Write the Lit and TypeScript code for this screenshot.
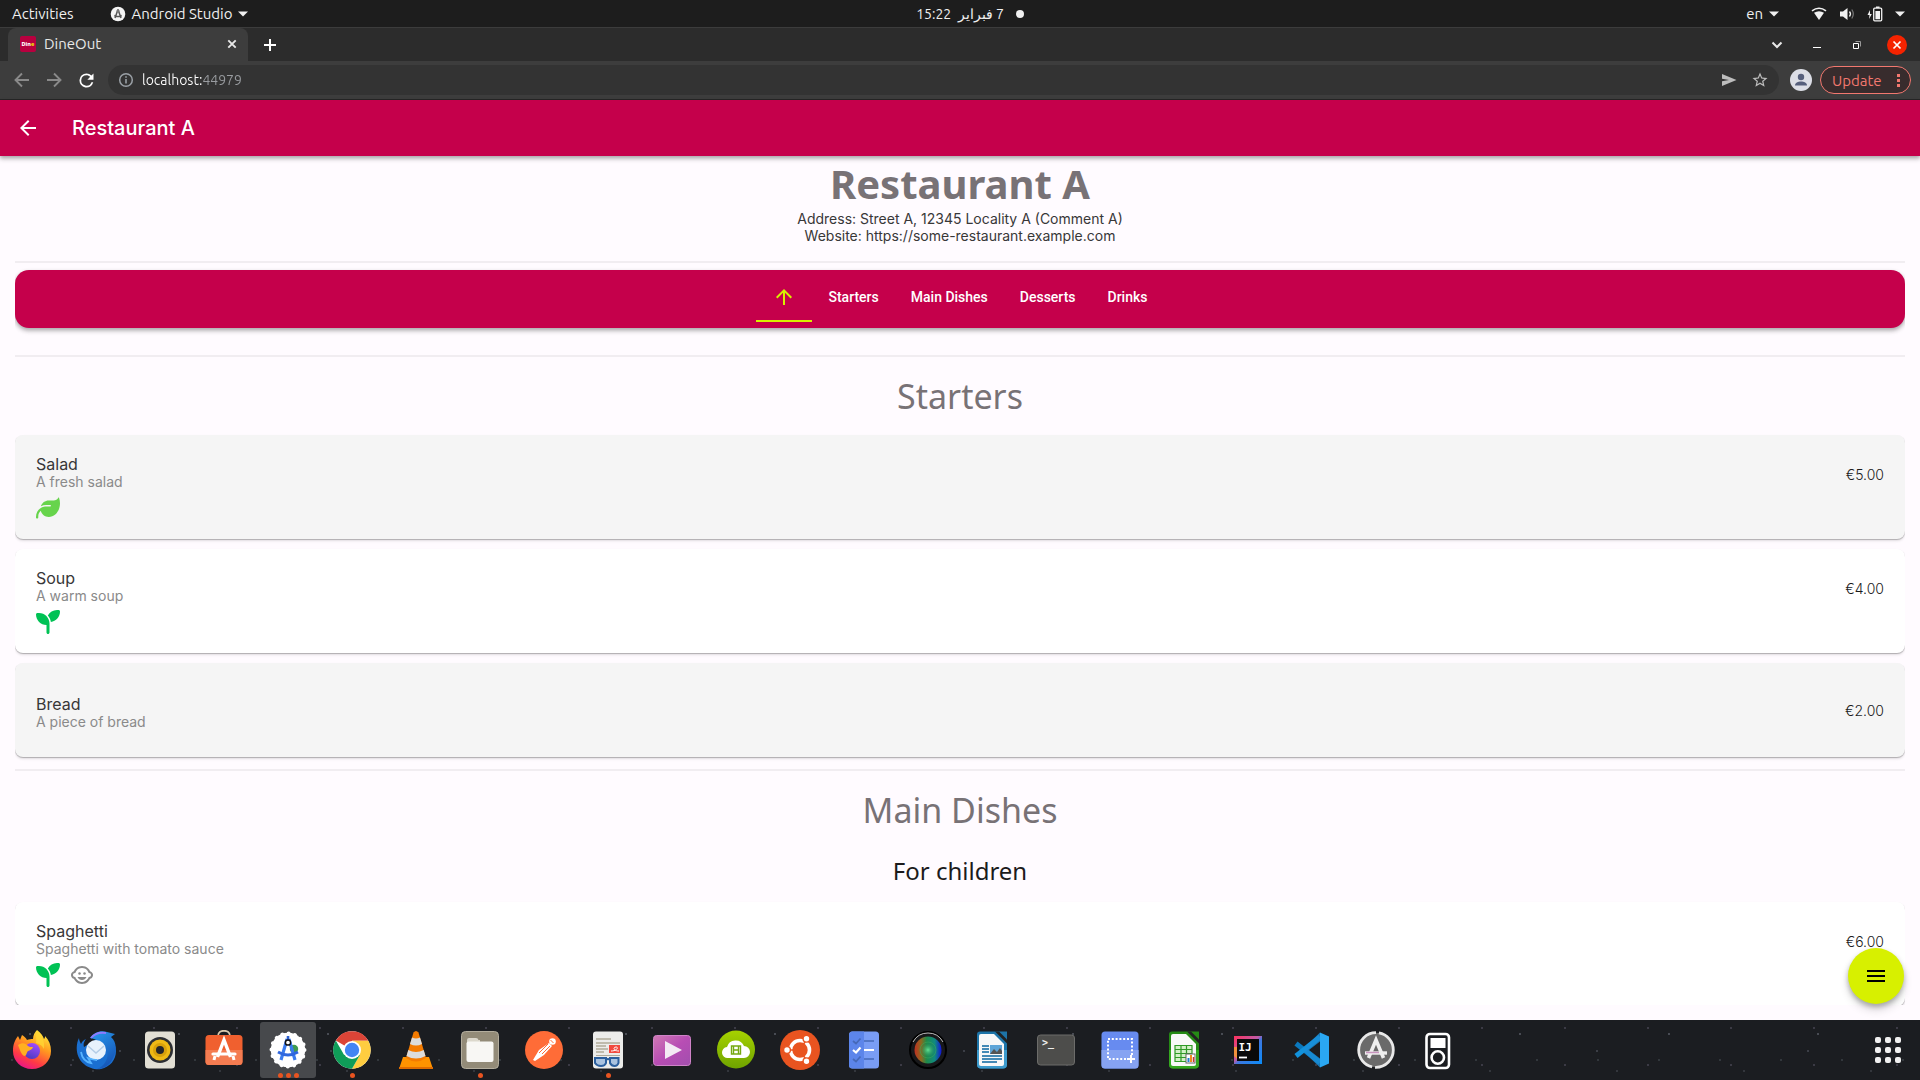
import { LitElement, html, svg, css, nothing, TemplateResult, SVGTemplateResult } from "lit";
import { customElement, property, state } from "lit/decorators.js";
import { classMap } from "lit/directives/class-map.js";

const icon = (body: SVGTemplateResult, size = 24, box = "0 0 24 24") =>
  html`<svg width=${size} height=${size} viewBox=${box} aria-hidden="true">${body}</svg>`;

const caret = () => icon(svg`<path fill="currentColor" d="M0 0h10L5 5z"/>`, 10, "0 0 10 5");

/* ---------- Desktop top panel ---------- */

@customElement("system-bar")
export class SystemBar extends LitElement {
  static styles = css`
    :host {
      display: grid;
      grid-template-columns: 1fr auto 1fr;
      align-items: center;
      height: 27px;
      background: #1d1d1d;
      color: #f0f0f0;
      font: 15px "Ubuntu", "Noto Sans", sans-serif;
    }
    button {
      display: flex;
      align-items: center;
      height: 27px;
      padding: 0;
      border: 0;
      background: none;
      color: inherit;
      font: inherit;
    }
    .side {
      display: flex;
      align-items: center;
      padding: 0 12px;
    }
    .left {
      gap: 36px;
    }
    .right {
      justify-content: flex-end;
      gap: 32px;
      padding-right: 15px;
    }
    .item {
      gap: 6px;
    }
    .clock {
      gap: 12px;
      padding-left: 20px;
      font-size: 14px;
    }
    .dot {
      width: 8px;
      height: 8px;
      border-radius: 50%;
      background: #f0f0f0;
    }
    .status {
      gap: 12px;
    }
  `;

  render() {
    return html`
      <div class="side left">
        <button>Activities</button>
        <button class="item">
          ${icon(svg`<circle cx="8" cy="8" r="7.300" fill="#f4f4f4"/><path d="M8 3.600 5 12M8 3.600 11 12M4.300 9.500q3.700 2 7.400 0" fill="none" stroke="#555" stroke-width="1.500"/><circle cx="8" cy="5" r="1.500" fill="#777"/>`, 16, "0 0 16 16")}
          Android Studio ${caret()}
        </button>
      </div>
      <button class="clock">
        <span dir="rtl">7 فبراير &nbsp;15:22</span>
        <span class="dot"></span>
      </button>
      <div class="side right">
        <button class="item">en ${caret()}</button>
        <button class="status" aria-label="System menu">
          ${icon(svg`<path fill="#f2f2f2" d="M8 14 3 6.800Q8 3.500 13 6.800z"/><path d="M1 4.800Q8-.4 15 4.800" fill="none" stroke="#f2f2f2" stroke-width="1.600"/>`, 16, "0 0 16 16")}
          ${icon(svg`<path fill="#f2f2f2" d="M1 5.500h3L8.500 2v12L4 10.500H1z"/><path d="M10.500 5.500q2 2.500 0 5" fill="none" stroke="#f2f2f2" stroke-width="1.300"/><path d="M12.800 3.500q3 4.500 0 9" fill="none" stroke="#777" stroke-width="1.200"/>`, 16, "0 0 16 16")}
          ${icon(svg`<path fill="#f2f2f2" d="M3 4 .5 9h2L2 13l2.800-5H3z"/><rect x="6.700" y="2.200" width="8" height="12.600" rx="1" fill="none" stroke="#f2f2f2" stroke-width="1.300"/><path fill="#f2f2f2" d="M9 .6h3.500v1.500H9zM8.400 5h4.600v8.300H8.400z"/>`, 16, "0 0 16 16")}
          ${caret()}
        </button>
      </div>
    `;
  }
}

/* ---------- Browser window frame ---------- */

@customElement("browser-frame")
export class BrowserFrame extends LitElement {
  static styles = css`
    :host {
      display: block;
      background: #2c2c2c;
      color: #e8e8e8;
      font: 15px "Ubuntu", "Noto Sans", sans-serif;
      border-bottom: 1px solid #262626;
    }
    button {
      display: grid;
      place-items: center;
      padding: 0;
      border: 0;
      background: none;
      color: inherit;
      font: inherit;
    }
    .strip {
      display: flex;
      align-items: center;
      height: 34px;
      padding: 0 13px 0 8px;
      box-sizing: border-box;
      border-top: 1px solid #3c3c3c;
    }
    .tab {
      display: flex;
      align-items: center;
      align-self: stretch;
      gap: 8px;
      width: 240px;
      padding: 0 8px 2px 12px;
      box-sizing: border-box;
      border-radius: 8px 8px 0 0;
      background: #3d3d3d;
    }
    .tab-title {
      flex: 1;
    }
    .small {
      width: 16px;
      height: 16px;
    }
    .new-tab {
      margin-left: 12px;
      width: 20px;
      height: 20px;
    }
    .window-buttons {
      display: flex;
      align-items: center;
      gap: 20px;
      margin-left: auto;
    }
    .window-buttons button {
      width: 20px;
      height: 20px;
    }
    .close {
      border-radius: 50%;
      background: #f52300;
      color: #fff;
    }
    .toolbar {
      display: flex;
      align-items: center;
      height: 38px;
      padding: 0 9px 0 12px;
      box-sizing: border-box;
      background: #3d3d3d;
    }
    .nav {
      display: flex;
      gap: 12px;
      color: #8a8a8a;
    }
    .reload {
      color: #fff;
    }
    .address {
      display: flex;
      flex: 1;
      align-items: center;
      gap: 6px;
      height: 30px;
      margin: 0 11px;
      padding: 0 10px 0 8px;
      box-sizing: border-box;
      border-radius: 15px;
      background: #333;
      color: #bdbdbd;
    }
    .address input {
      flex: 1;
      min-width: 0;
      padding: 0;
      border: 0;
      outline: 0;
      font: inherit;
      font-size: 14px;
      color: transparent;
      background: linear-gradient(90deg, #fff 61px, #999ca0 61px);
      -webkit-background-clip: text;
      background-clip: text;
    }
    .tools {
      display: flex;
      gap: 12px;
    }
    .update {
      display: flex;
      align-items: center;
      justify-content: space-between;
      width: 91px;
      height: 28px;
      margin-left: 8px;
      padding: 0 5px 0 11px;
      box-sizing: border-box;
      border: 1px solid #f2786f;
      border-radius: 14px;
      background: #382c2d;
      color: #f2786f;
    }
  `;

  render() {
    return html`
      <div class="strip">
        <div class="tab">
          ${icon(svg`<rect width="16" height="16" rx="2" fill="#b8003f"/><text x="1.500" y="10" font-family="Noto Sans" font-weight="800" font-size="5.500" fill="#fff">Din<tspan fill="#f0e000">e</tspan></text>`, 16, "0 0 16 16")}
          <span class="tab-title">DineOut</span>
          <button class="small" aria-label="Close tab">
            ${icon(svg`<path d="m4.300 4.300 7.400 7.400m0-7.400-7.400 7.400" stroke="currentColor" stroke-width="1.900"/>`, 16, "0 0 16 16")}
          </button>
        </div>
        <button class="new-tab" aria-label="New tab">
          ${icon(svg`<path d="M10 4v12M4 10h12" stroke="#fff" stroke-width="2"/>`, 20, "0 0 20 20")}
        </button>
        <div class="window-buttons">
          <button aria-label="Search tabs">
            ${icon(svg`<path d="m5.500 7.500 4.500 4.500 4.500-4.500" fill="none" stroke="currentColor" stroke-width="2"/>`, 20, "0 0 20 20")}
          </button>
          <button aria-label="Minimise">
            ${icon(svg`<path d="M6 12.500h8" stroke="#fff" stroke-width="1"/>`, 20, "0 0 20 20")}
          </button>
          <button aria-label="Restore">
            ${icon(svg`<path d="M8.500 6.500h5v5" fill="none" stroke="#999"/><path d="M6.500 8.500h5v5h-5z" fill="none" stroke="#fff"/>`, 20, "0 0 20 20")}
          </button>
          <button class="close" aria-label="Close window">
            ${icon(svg`<path d="m6.500 6.500 7 7m0-7-7 7" stroke="currentColor" stroke-width="1.700"/>`, 20, "0 0 20 20")}
          </button>
        </div>
      </div>
      <div class="toolbar">
        <div class="nav">
          <button aria-label="Back">
            ${icon(svg`<path d="M17 10H4m6-6.500L3.500 10l6.500 6.500" fill="none" stroke="currentColor" stroke-width="1.900"/>`, 20, "0 0 20 20")}
          </button>
          <button aria-label="Forward">
            ${icon(svg`<path d="M3 10h13m-6-6.500 6.500 6.500-6.500 6.500" fill="none" stroke="currentColor" stroke-width="1.900"/>`, 20, "0 0 20 20")}
          </button>
          <button class="reload" aria-label="Reload">
            ${icon(svg`<path fill="currentColor" d="M17.650 6.350A7.960 7.960 0 0 0 12 4a8 8 0 1 0 7.730 10h-2.080A6 6 0 1 1 12 6c1.660 0 3.140.69 4.220 1.780L13 11h7V4z"/>`, 21)}
          </button>
        </div>
        <div class="address">
          ${icon(svg`<circle cx="10" cy="10" r="6.300" fill="none" stroke="#9aa0a6" stroke-width="1.500"/><path d="M10 9v4.500M10 6.300v1.500" stroke="#9aa0a6" stroke-width="1.600"/>`, 20, "0 0 20 20")}
          <input type="text" aria-label="Address" .value=${"localhost:44979"} spellcheck="false" />
          <div class="tools">
            <button aria-label="Share this page">
              ${icon(svg`<path fill="currentColor" d="M3 4 17.500 10 3 16v-4.700L10 10 3 8.700z"/>`, 20, "0 0 20 20")}
            </button>
            <button aria-label="Bookmark this page">
              ${icon(svg`<path fill="currentColor" d="m22 9.240-7.190-.62L12 2 9.190 8.630 2 9.240l5.460 4.730L5.820 21 12 17.270 18.180 21l-1.630-7.030zM12 15.400l-3.760 2.270 1-4.280-3.320-2.880 4.380-.38L12 6.100l1.710 4.040 4.380.38-3.320 2.880 1 4.280z"/>`, 18)}
            </button>
          </div>
        </div>
        <button aria-label="Profile">
          ${icon(svg`<circle cx="11" cy="11" r="11" fill="#dcdee6"/><circle cx="11" cy="8" r="3.200" fill="#565f7c"/><path d="M5 16.500c0-2.600 3-4 6-4s6 1.400 6 4z" fill="#565f7c"/>`, 22, "0 0 22 22")}
        </button>
        <button class="update">
          Update
          ${icon(svg`<path fill="currentColor" d="M0 0h3v3H0zM0 5h3v3H0zM0 10h3v3H0z"/>`, 13, "-5 0 13 13")}
        </button>
      </div>
    `;
  }
}

/* ---------- Restaurant page ---------- */

type Tag = "vegetarian" | "vegan" | "child";

interface Dish {
  name: string;
  note: string;
  price: string;
  tags: Tag[];
  shaded?: boolean;
}

interface Section {
  title: string;
  subtitle?: string;
  dishes: Dish[];
}

const MENU: Section[] = [
  {
    title: "Starters",
    dishes: [
      { name: "Salad", note: "A fresh salad", price: "€5.00", tags: ["vegetarian"], shaded: true },
      { name: "Soup", note: "A warm soup", price: "€4.00", tags: ["vegan"] },
      { name: "Bread", note: "A piece of bread", price: "€2.00", tags: [], shaded: true },
    ],
  },
  {
    title: "Main Dishes",
    subtitle: "For children",
    dishes: [
      { name: "Spaghetti", note: "Spaghetti with tomato sauce", price: "€6.00", tags: ["vegan", "child"] },
    ],
  },
];

const TAGS: Record<Tag, () => TemplateResult> = {
  vegetarian: () => icon(svg`<path fill="#67d44c" d="M272 96c-78.600 0-145.100 51.500-167.700 122.500 33.600-17 71.500-26.500 111.700-26.500h88c8.800 0 16 7.200 16 16s-7.200 16-16 16h-88c-16.600 0-32.700 1.900-48.300 5.400-25.900 5.900-49.900 16.400-71.400 30.700C38.300 298.800 0 364.900 0 440v16c0 13.300 10.700 24 24 24s24-10.700 24-24v-16c0-48.700 20.700-92.500 53.800-123.200C121.600 392.300 190.300 448 272 448h1c132.100-.7 239-130.900 239-291.400 0-42.600-7.500-83.100-21.100-119.600-2.600-6.900-12.700-6.600-16.200-.1C455.900 72.100 418.700 96 376 96z"/>`, 24, "0 0 512 512"),
  vegan: () => icon(svg`<path fill="#00c255" d="M512 32c0 113.600-84.600 207.500-194.200 222-7.100-53.400-30.600-101.600-65.300-139.300C290.800 46.300 364 0 448 0h32c17.700 0 32 14.300 32 32zM0 96c0-17.700 14.300-32 32-32h32c123.700 0 224 100.300 224 224v192c0 17.700-14.300 32-32 32s-32-14.300-32-32V320C100.300 320 0 219.700 0 96z"/>`, 24, "0 0 512 512"),
  child: () => icon(svg`<g fill="#8a8a8a"><circle cx="14.500" cy="10.500" r="1.250"/><circle cx="9.500" cy="10.500" r="1.250"/><path d="M22.940 12.660c.04-.21.06-.43.06-.66s-.02-.45-.06-.66c-.25-1.510-1.360-2.740-2.810-3.170-.53-1.120-1.280-2.100-2.190-2.910C16.360 3.850 14.280 3 12 3s-4.360.85-5.940 2.260c-.92.81-1.670 1.800-2.190 2.910-1.450.43-2.560 1.650-2.810 3.170-.04.21-.06.43-.06.66s.02.45.06.66c.25 1.510 1.360 2.740 2.810 3.170.52 1.110 1.270 2.090 2.170 2.890C7.620 20.140 9.710 21 12 21s4.380-.86 5.970-2.280c.9-.8 1.650-1.790 2.170-2.890 1.440-.43 2.550-1.650 2.800-3.170zM19 14c-.1 0-.19-.02-.29-.03-.2.67-.49 1.290-.86 1.860C16.600 17.740 14.450 19 12 19s-4.600-1.260-5.850-3.170c-.37-.57-.66-1.190-.86-1.860-.1.01-.19.03-.29.03-1.100 0-2-.9-2-2s.9-2 2-2c.1 0 .19.02.29.03.2-.67.49-1.290.86-1.860C7.400 6.260 9.550 5 12 5s4.600 1.260 5.850 3.170c.37.57.66 1.190.86 1.860.1-.01.19-.03.29-.03 1.100 0 2 .9 2 2s-.9 2-2 2zM7.500 14c.76 1.770 2.490 3 4.500 3s3.740-1.230 4.500-3z"/></g>`),
};

@customElement("dish-card")
export class DishCard extends LitElement {
  @property({ attribute: false }) dish!: Dish;

  static styles = css`
    :host {
      display: block;
    }
    .card {
      display: flex;
      align-items: flex-start;
      justify-content: space-between;
      padding: 20px 21px 19px;
      border-radius: 8px;
      background: #fff;
      box-shadow: 0 1px 1px rgba(0, 0, 0, 0.24), 0 2px 3px rgba(0, 0, 0, 0.1);
      line-height: 18px;
    }
    .shaded {
      background: #f5f5f5;
    }
    .plain {
      padding: 32px 21px 26px;
    }
    .name {
      margin: 0;
      font-size: 16px;
      font-weight: 400;
      color: #383738;
    }
    .note {
      margin: 0;
      font-size: 14px;
      font-weight: 400;
      color: #8a8a8a;
    }
    .tags {
      display: flex;
      gap: 10px;
      margin-top: 5px;
    }
    .price {
      margin-top: 11px;
      font-size: 14px;
      font-weight: 300;
      color: #1c1b1c;
    }
    .plain .price {
      margin-top: 7px;
    }
  `;

  render() {
    const { name, note, price, tags, shaded } = this.dish;
    return html`
      <article class=${classMap({ card: true, shaded: !!shaded, plain: !tags.length })}>
        <div>
          <h4 class="name">${name}</h4>
          <p class="note">${note}</p>
          ${tags.length ? html`<div class="tags">${tags.map((t) => TAGS[t]())}</div>` : nothing}
        </div>
        <span class="price">${price}</span>
      </article>
    `;
  }
}

@customElement("restaurant-page")
export class RestaurantPage extends LitElement {
  @state() private active = 0;

  static styles = css`
    :host {
      position: relative;
      display: flex;
      flex-direction: column;
      min-height: 0;
      background: #fffbff;
      font-family: "Inter", "Roboto", sans-serif;
      color: #1c1b1c;
    }
    button {
      padding: 0;
      border: 0;
      background: none;
      color: inherit;
      font: inherit;
    }
    .appbar {
      display: flex;
      align-items: center;
      gap: 32px;
      height: 56px;
      flex: none;
      padding: 0 16px;
      background: #c5004b;
      color: #fff;
      box-shadow: 0 2px 4px rgba(0, 0, 0, 0.3), 0 4px 5px rgba(0, 0, 0, 0.08);
      z-index: 1;
    }
    .back {
      display: grid;
      width: 24px;
      height: 24px;
    }
    .appbar h1 {
      margin: 0;
      font-size: 20px;
      font-weight: 500;
    }
    .scroll {
      flex: 1;
      min-height: 0;
      margin: 0 15px 15px;
      overflow: hidden;
    }
    .intro {
      height: 105px;
      text-align: center;
    }
    .intro h2 {
      margin: 0;
      padding-top: 2px;
      font: 700 40px/52px "Noto Sans", sans-serif;
      color: #787276;
    }
    .intro p {
      margin: 0;
      font-size: 14px;
      font-weight: 400;
      line-height: 17px;
      color: #383738;
    }
    hr {
      height: 2px;
      margin: 0;
      border: 0;
      background: #f1edf1;
    }
    .tabs {
      display: flex;
      justify-content: center;
      margin: 7px 0 27px;
      padding: 2px 0 6px;
      border-radius: 14px;
      background: #c5004b;
      color: #fff;
      box-shadow: 0 2px 4px rgba(0, 0, 0, 0.3), 0 4px 5px rgba(0, 0, 0, 0.08);
      font: 500 14px "Roboto", sans-serif;
    }
    .tab {
      display: flex;
      align-items: center;
      height: 50px;
      padding: 2px 16px 0;
      box-sizing: border-box;
      border-bottom: 2px solid transparent;
    }
    .tab.active {
      color: #d7f000;
      border-color: #d7f000;
    }
    .section h3 {
      margin: 0;
      padding: 4px 0;
      text-align: center;
      font: 400 34px/70px "Noto Sans", sans-serif;
      color: #787276;
    }
    .section .subtitle {
      margin: 0;
      padding-bottom: 9px;
      text-align: center;
      font: 400 24px/44px "Noto Sans", sans-serif;
    }
    .dishes {
      display: grid;
      gap: 10px;
      margin: 0;
      padding: 0 0 12px;
      list-style: none;
    }
    .fab {
      position: absolute;
      right: 16px;
      bottom: 16px;
      display: grid;
      place-items: center;
      width: 56px;
      height: 56px;
      border-radius: 50%;
      background: #d7f000;
      color: #000;
      box-shadow: 0 3px 5px rgba(0, 0, 0, 0.26), 0 6px 10px rgba(0, 0, 0, 0.14);
    }
  `;

  render() {
    const tabs = [
      icon(svg`<path fill="currentColor" d="m4 12 1.410 1.410L11 7.830V20h2V7.830l5.580 5.590L20 12l-8-8z"/>`),
      "Starters",
      "Main Dishes",
      "Desserts",
      "Drinks",
    ];
    return html`
      <header class="appbar">
        <button class="back" aria-label="Back">
          ${icon(svg`<path fill="currentColor" d="M20 11H7.830l5.590-5.590L12 4l-8 8 8 8 1.410-1.410L7.830 13H20z"/>`)}
        </button>
        <h1>Restaurant A</h1>
      </header>
      <main class="scroll">
        <div class="intro">
          <h2>Restaurant A</h2>
          <p>Address: Street A, 12345 Locality A (Comment A)</p>
          <p>Website: https://some-restaurant.example.com</p>
        </div>
        <hr />
        <nav class="tabs" role="tablist" aria-label="Menu sections">
          ${tabs.map(
            (label, i) => html`<button
              class=${classMap({ tab: true, active: i === this.active })}
              role="tab"
              aria-label=${i === 0 ? "Top" : nothing}
              aria-selected=${i === this.active ? "true" : "false"}
              @click=${() => (this.active = i)}
            >${label}</button>`
          )}
        </nav>
        ${MENU.map(
          (s) => html`
            <hr />
            <section class="section">
              <h3>${s.title}</h3>
              ${s.subtitle ? html`<p class="subtitle">${s.subtitle}</p>` : nothing}
              <ul class="dishes">
                ${s.dishes.map((d) => html`<li><dish-card .dish=${d}></dish-card></li>`)}
              </ul>
            </section>
          `
        )}
      </main>
      <button class="fab" aria-label="Open menu">
        ${icon(svg`<path fill="currentColor" d="M3 18h18v-2H3zm0-5h18v-2H3zm0-7v2h18V6z"/>`)}
      </button>
    `;
  }
}

/* ---------- Desktop dock ---------- */

interface App {
  name: string;
  art: SVGTemplateResult;
  windows?: number;
  focused?: boolean;
}

const APPS: App[] = [
  {
    name: "Firefox",
    art: svg`
      <defs>
        <linearGradient id="ff1" x1=".8" y1="0" x2=".3" y2="1"><stop offset="0" stop-color="#fff23f"/><stop offset=".4" stop-color="#ff9a1f"/><stop offset=".75" stop-color="#ff3a45"/><stop offset="1" stop-color="#e8148a"/></linearGradient>
        <linearGradient id="ff2" x1=".7" y1="0" x2=".3" y2="1"><stop offset="0" stop-color="#a34bff"/><stop offset="1" stop-color="#4b3bbf"/></linearGradient>
      </defs>
      <path fill="url(#ff1)" d="M25 0c4 3 6 6 7 9 1-1 1-2 1-3 4 4 6 9 6 15 0 10-8 18-19 18S1 31 1 21C1 14 3 10 6 6l2 4 2-5c2 1 4 3 5 5 2-1 4-1 6-1 0-4 2-7 4-9z"/>
      <circle cx="20" cy="21" r="8" fill="url(#ff2)"/>
      <path fill="#ffb021" d="M6 15c4-3 8-2 10 1 1 1 3 1 5 1-1 3-3 3-5 4-2 2-1 5-4 5-3-2-4-6-6-11z"/>
      <path fill="#ffd633" d="M25 1c5 5 8 10 7 18-2-4-5-5-8-6 1-4-1-7 1-12z" opacity=".8"/>`,
  },
  {
    name: "Thunderbird",
    art: svg`
      <defs><linearGradient id="tb" x1="0" y1="0" x2=".5" y2="1"><stop offset="0" stop-color="#2a9cf0"/><stop offset="1" stop-color="#1657b8"/></linearGradient></defs>
      <path fill="#1a6fd0" d="M3 8c-4 8-3 20 5 26 4 4 12 6 17 5 9-2 15-9 15-18 0-5-2-8-3-10L25 6 8 17c-1-3 0-5 2-8-3 1-4 3-5 5-1-2-2-4-2-6z"/>
      <path fill="url(#tb)" d="M14 8C18 2 25 0 31 2l8 2-4 3c5 4 6 12 3 19-3 8-9 13-17 13 9-4 12-12 10-20-2-6-8-9-17-11z"/>
      <path d="M15 8c4-5 9-6 15-5" fill="none" stroke="#8d7bff" stroke-width="2"/>
      <circle cx="20" cy="20" r="10" fill="#e8f2fc"/><path d="m12 16 8 7 8-7" fill="none" stroke="#b4cde6" stroke-width="1.500"/>
      <path d="M5 22c1 6 5 10 10 11l-3-5c3 1 6 2 9 2" fill="none" stroke="#58b4ff" stroke-width="1.800"/>`,
  },
  {
    name: "Rhythmbox",
    art: svg`
      <rect x="5" y="1.500" width="30" height="37" rx="3.500" fill="#e2dfd4"/><circle cx="20" cy="20" r="13" fill="#2c2e33"/>
      <circle cx="20" cy="20" r="10.500" fill="#efb915"/><circle cx="20" cy="20" r="7" fill="#d8a00b"/><circle cx="20" cy="20" r="4" fill="#25262a"/>`,
  },
  {
    name: "Ubuntu Software",
    art: svg`
      <path d="M14 6c0-7 12-7 12 0v2" fill="none" stroke="#d9c8ad" stroke-width="1.800"/><rect x="1.500" y="5" width="37" height="30" rx="3.500" fill="#f0602f"/>
      <path fill="#f47c51" d="M1.500 20h37v11.500a3.500 3.500 0 0 1-3.500 3.500H5a3.500 3.500 0 0 1-3.500-3.500z"/>
      <path d="M13.500 27 20 10l6.500 17" fill="none" stroke="#fff" stroke-width="3.400"/><path d="M9 24h22" stroke="#fff" stroke-width="3.200" stroke-linecap="round"/><path d="m11 26-1 4m19-4 1 4" stroke="#fff" stroke-width="3"/>`,
  },
  {
    name: "Android Studio",
    windows: 3,
    focused: true,
    art: svg`
      <circle cx="20" cy="20" r="17.200" fill="#fff"/><circle cx="20" cy="20" r="16.500" fill="none" stroke="#fff" stroke-width="4" stroke-linecap="round" stroke-dasharray=".01 6.480"/>
      <circle cx="26" cy="19" r="4.200" fill="#3f9b50"/><path d="M19 9 13 30M21 9l6 21" stroke="#3a7bee" stroke-width="3.200"/>
      <path d="M10 22q10 6 20 0" fill="none" stroke="#2f66dd" stroke-width="2.800"/><path d="M20 6v5" stroke="#2b5fd0" stroke-width="2.600"/>
      <circle cx="20" cy="12.500" r="2.600" fill="#fff" stroke="#111" stroke-width="1.500"/>`,
  },
  {
    name: "Google Chrome",
    windows: 1,
    art: svg`
      <circle cx="20" cy="20" r="18.700" fill="#fff"/>
      <path fill="#db4437" d="M20 20 3.800 10.600A18.700 18.700 0 0 1 36.200 10.700H20z"/>
      <path fill="#ffcd40" d="M36.200 10.700A18.700 18.700 0 0 1 20 38.700L28 24.600 20 10.700z"/>
      <path fill="#0f9d58" d="M3.800 10.600A18.700 18.700 0 0 0 20 38.700l8-14H12z"/>
      <circle cx="20" cy="20" r="9" fill="#fff"/><circle cx="20" cy="20" r="7.200" fill="#4285f4"/>`,
  },
  {
    name: "VLC media player",
    art: svg`
      <path fill="#ff9300" d="M7 27h26l4 12H3z"/><path fill="#e06c00" d="M3 37h34v2H3z"/>
      <path fill="#f47b00" d="M17.500 2.500Q20-.5 22.500 2.500L30 28q-10 7-20 0z"/>
      <path fill="#dcdcdc" d="M16 7.500q4 2 8 0l2 6.500q-6 3-12 0zM12.300 20q7.700 4 15.400 0l1.800 6q-9.500 5-19 0z"/>`,
  },
  {
    name: "Files",
    windows: 1,
    art: svg`
      <rect x="1.500" y="1.500" width="37" height="37" rx="4" fill="#938b78"/><rect x="1.500" y="1.500" width="37" height="37" rx="4" fill="none" stroke="#b3ad9d"/>
      <path fill="#dcd8cc" d="M7 10a2 2 0 0 1 2-2h7q2 0 2.500 2H20v5H7z"/><rect x="6.500" y="11.500" width="27" height="20.500" rx="2" fill="#f8f7f4"/>`,
  },
  {
    name: "Postman",
    art: svg`
      <circle cx="20" cy="20" r="19" fill="#ff6c37"/><circle cx="28.500" cy="11.500" r="3.300" fill="#fff"/>
      <path fill="#fff" d="m25 13 3 3-8 9-9 6-2-1 6-10z"/><path d="m15 23 9-9m-6 10 8-8M26.500 10l3 3" stroke="#ff6c37" stroke-width="1"/>`,
  },
  {
    name: "Document Viewer",
    windows: 1,
    art: svg`
      <rect x="5" y="1.500" width="30" height="37" rx="3" fill="#ececea"/><path d="M8 9h15M8 13h24M8 16h10M8 19h12M8 22h8" stroke="#b0aa99" stroke-width="1.700"/>
      <rect x="21" y="15" width="11" height="8" fill="#f24a3f"/><path d="M23 21c6 0 8-4 5-4s-3 4 3 4" fill="none" stroke="#fff"/>
      <path d="M8 25.500h24" stroke="#b0aa99"/><path fill="#8fb2dc" fill-opacity=".7" stroke="#2b5f9e" stroke-width="2" d="M7 28h11v5q-1 3-5 3t-6-3zm15 0h8.500v5q-1 3-4 3t-4.500-3zM18 30q2-2 4 0"/>`,
  },
  {
    name: "Videos",
    art: svg`
      <defs><linearGradient id="vd" x1="0" y1="0" x2="1" y2="1"><stop offset="0" stop-color="#d07ab4"/><stop offset=".5" stop-color="#b84db4"/><stop offset="1" stop-color="#a14fae"/></linearGradient></defs>
      <rect x="1.500" y="5.500" width="37" height="30" rx="3" fill="url(#vd)" stroke="#cf83c8"/><path fill="#f4eaf4" d="m13 11 17 9-17 9z"/>`,
  },
  {
    name: "Cloud Media",
    art: svg`
      <defs><linearGradient id="cm" x1="0" y1="0" x2="0" y2="1"><stop offset="0" stop-color="#a6d200"/><stop offset="1" stop-color="#6fa300"/></linearGradient></defs>
      <circle cx="20" cy="19.500" r="19" fill="url(#cm)"/><path fill="#fff" d="M12 28a5.500 5.500 0 0 1-1-11 9 9 0 0 1 17-1 6 6 0 0 1 0 12z"/>
      <path d="M15.500 16h9v8h-9zm2 0v8m5-8v8m-5-4h5" fill="none" stroke="#76a912" stroke-width="1.400"/>`,
  },
  {
    name: "Ubuntu",
    art: svg`
      <circle cx="20" cy="20" r="20" fill="#e95420"/><circle cx="20" cy="20" r="9.500" fill="none" stroke="#fff" stroke-width="3.600"/>
      <path d="m20 20 8-13M20 20H5m15 0 8 13" stroke="#e95420" stroke-width="1.500"/>
      <g fill="#fff" stroke="#e95420" stroke-width="1.400"><circle cx="7" cy="20" r="3.400"/><circle cx="26.500" cy="8.700" r="3.400"/><circle cx="26.500" cy="31.300" r="3.400"/></g>`,
  },
  {
    name: "To Do",
    art: svg`
      <rect x="5" y="1.500" width="30" height="37" rx="3.500" fill="#799df5"/><path fill="#5c85ea" d="M8.500 1.500H20v37H8.500A3.500 3.500 0 0 1 5 35V5a3.500 3.500 0 0 1 3.500-3.500z"/>
      <path d="m9 11 3 2.500 4.500-5M20 11h10M9 29l3 2.500 4.500-5M20 29h10" fill="none" stroke="#4669b8" stroke-width="1.700"/><path d="m9 20 3 2.500 4.500-5M20 20h10" fill="none" stroke="#fff" stroke-width="2.200"/>`,
  },
  {
    name: "Camera",
    art: svg`
      <defs>
        <linearGradient id="ca"><stop offset="0" stop-color="#c03020"/><stop offset=".25" stop-color="#8a6a20"/><stop offset=".45" stop-color="#1f8a4a"/><stop offset=".75" stop-color="#108a80"/><stop offset="1" stop-color="#1414d8"/></linearGradient>
        <radialGradient id="cb"><stop offset="0" stop-color="#6bea9a" stop-opacity=".9"/><stop offset="1" stop-color="#0a6a38" stop-opacity="0"/></radialGradient>
      </defs>
      <circle cx="20" cy="20" r="18" fill="#18181a" stroke="#000" stroke-width="2"/><path d="M5 12a17 17 0 0 1 30 0" fill="none" stroke="#bbb"/><circle cx="20" cy="20" r="13.500" fill="url(#ca)"/>
      <circle cx="20" cy="20" r="9" fill="url(#cb)"/><circle cx="20" cy="20" r="8" fill="none" stroke="#3aa85c" stroke-opacity=".6"/>`,
  },
  {
    name: "LibreOffice Writer",
    art: svg`
      <path fill="#1d74a8" d="M8 1.500h27v33a4 4 0 0 1-4 4H9a4 4 0 0 1-4-4v-30a3 3 0 0 1 3-3z"/><path fill="#3d9bcd" d="M5 20h30v14.500a4 4 0 0 1-4 4H9a4 4 0 0 1-4-4z"/>
      <path fill="#f8f8f8" d="M9 4h13l10 10v20q0 2-2 2H9q-2 0-2-2V6q0-2 2-2z"/><path fill="#222" d="M23 1.500h4l8 8v4z"/>
      <path d="M10 16h7m-7 3h7m-7 3h7m-7 4h20m-20 3h20m-20 3h15" stroke="#0a66a0" stroke-width="1.500"/><rect x="18" y="15" width="12" height="9" fill="#5ea5d8"/><path fill="#555" d="m18 24 4-5 3 3 3-4 2 3v3z"/>`,
  },
  {
    name: "Terminal",
    art: svg`
      <rect x="1.500" y="5" width="37" height="30" rx="3" fill="#4d4d4b" stroke="#6c6c6a"/><text x="6" y="16" font-family="DejaVu Sans Mono" font-weight="700" font-size="10" fill="#eee">&gt;_</text>`,
  },
  {
    name: "Screenshot",
    art: svg`
      <rect x="1.500" y="1.500" width="37" height="37" rx="3.500" fill="#678bf0"/><path fill="#86a3f2" d="M1.500 20h37v15a3.500 3.500 0 0 1-3.500 3.500H5A3.500 3.500 0 0 1 1.500 35z"/>
      <path d="M32 25V9H8v20h20" fill="none" stroke="#fff" stroke-width="2" stroke-dasharray="2 1.800"/><path d="M31 25v8m-4-4h8" stroke="#fff" stroke-width="2"/>`,
  },
  {
    name: "LibreOffice Calc",
    art: svg`
      <path fill="#258a15" d="M8 1.500h27v33a4 4 0 0 1-4 4H9a4 4 0 0 1-4-4v-30a3 3 0 0 1 3-3z"/><path fill="#35a81f" d="M5 20h30v14.500a4 4 0 0 1-4 4H9a4 4 0 0 1-4-4z"/>
      <path fill="#f8f8f8" d="M9 4h13l10 10v20q0 2-2 2H9q-2 0-2-2V6q0-2 2-2z"/><path fill="#222" d="M23 1.500h4l8 8v4z"/>
      <path fill="#d2f0c6" stroke="#2f9a26" stroke-width="1.200" d="M11 15.500h17v16H11zm0 4h17m-17 4h17m-17 4h17m-11-12v16m5.500-16v16"/>
      <rect x="22" y="24" width="9" height="9" fill="#fff" stroke="#666"/><path d="M24.500 32v-4" stroke="#1f7fd0" stroke-width="2"/><path d="M27 32v-7" stroke="#f08a20" stroke-width="2"/><path d="M29.500 32v-5" stroke="#c33" stroke-width="1.500"/>`,
  },
  {
    name: "IntelliJ IDEA",
    art: svg`
      <defs><linearGradient id="ij" x1="0" y1="0" x2="1" y2="1"><stop offset="0" stop-color="#fe315d"/><stop offset=".45" stop-color="#c05ba8"/><stop offset=".55" stop-color="#3d78e0"/><stop offset="1" stop-color="#0a8cf8"/></linearGradient></defs>
      <rect x="6" y="6" width="28" height="28" fill="url(#ij)"/><path fill="#f0913c" d="M6 17h5v14l-5-5z"/><rect x="9" y="9" width="22" height="22" fill="#0a0a0a"/>
      <text x="10.500" y="21" font-family="DejaVu Sans Mono" font-weight="700" font-size="11" fill="#fff">IJ</text><path d="M11 27.500h8" stroke="#fff" stroke-width="1.800"/>`,
  },
  {
    name: "Visual Studio Code",
    art: svg`
      <path d="m4 13.500 24 19" stroke="#0b78bd" stroke-width="5"/><path d="m4 26 24-19" stroke="#1292dc" stroke-width="5"/>
      <path fill="#2aa7f2" d="m28 2.500 9 4v27l-9 4z"/><path fill="#1a8fd8" d="M28 2.500v9L17 20l11 8.500v9L12 22v-4z" opacity=".8"/><path fill="#1b1d21" d="M28 12.500v15L18.500 20z"/>`,
  },
  {
    name: "Software Updater",
    art: svg`
      <circle cx="20" cy="20" r="17.300" fill="#6a6a6a" stroke="#e8e8e8" stroke-width="2.800" stroke-dasharray="28 3 50 3"/>
      <path d="M12.500 28 20 10l7.500 18" fill="none" stroke="#efefef" stroke-width="3.600"/><path d="M9 23h22" stroke="#efefef" stroke-width="3.400"/><path d="M10 22.500h13" stroke="#c894bf" stroke-width="1.500"/>`,
  },
  {
    name: "Media Player",
    art: svg`
      <rect x="6.500" y="4" width="22.500" height="34" rx="3.500" fill="#1b1d21" stroke="#fff" stroke-width="2.600"/><rect x="10.500" y="8" width="15" height="10" fill="#fff"/>
      <circle cx="17.800" cy="27.500" r="6.200" fill="none" stroke="#fff" stroke-width="2.600"/>`,
  },
];

@customElement("app-dock")
export class AppDock extends LitElement {
  static styles = css`
    :host {
      display: flex;
      align-items: center;
      justify-content: space-between;
      height: 60px;
      padding: 0 4px;
      background-color: #1b1d21;
      background-image: radial-gradient(circle at 30px 14px, #484b53 0 1px, transparent 1px),
        radial-gradient(circle at 120px 31px, #3b3e46 0 1px, transparent 1px),
        radial-gradient(circle at 71px 8px, #3b3a45 0 1px, transparent 1px),
        radial-gradient(circle at 12px 40px, #32373c 0 1px, transparent 1px),
        radial-gradient(circle at 93px 51px, #33363c 0 1px, transparent 1px);
      background-size: 149px 60px, 211px 47px, 83px 37px, 61px 53px, 127px 59px;
    }
    .apps {
      display: flex;
      gap: 8px;
    }
    button {
      position: relative;
      display: grid;
      place-items: center;
      width: 56px;
      height: 56px;
      padding: 0;
      border: 0;
      border-radius: 3px;
      background: none;
    }
    .focused {
      background: #47494c;
    }
    .running {
      position: absolute;
      right: 0;
      bottom: 0;
      left: 0;
      display: flex;
      justify-content: center;
      gap: 3px;
    }
    .running i {
      width: 5px;
      height: 5px;
      border-radius: 50%;
      background: #e95420;
    }
  `;

  render() {
    return html`
      <div class="apps">
        ${APPS.map(
          (a) => html`<button class=${classMap({ focused: !!a.focused })} aria-label=${a.name}>
            ${icon(a.art, 40, "0 0 40 40")}
            ${a.windows
              ? html`<span class="running">${Array.from({ length: a.windows }, () => html`<i></i>`)}</span>`
              : nothing}
          </button>`
        )}
      </div>
      <button aria-label="Show applications">
        ${icon(
          svg`<g fill="#f0f0f0">${[0, 10, 20].map((y) =>
            [0, 10, 20].map((x) => svg`<rect x=${x} y=${y} width="6" height="6" rx="2"/>`)
          )}</g>`,
          26,
          "0 0 26 26"
        )}
      </button>
    `;
  }
}

@customElement("app-root")
export class AppRoot extends LitElement {
  static styles = css`
    :host {
      display: flex;
      flex-direction: column;
      height: 100vh;
    }
    .page {
      flex: 1;
    }
  `;

  render() {
    return html`
      <system-bar></system-bar>
      <browser-frame></browser-frame>
      <restaurant-page class="page"></restaurant-page>
      <app-dock></app-dock>
    `;
  }
}
